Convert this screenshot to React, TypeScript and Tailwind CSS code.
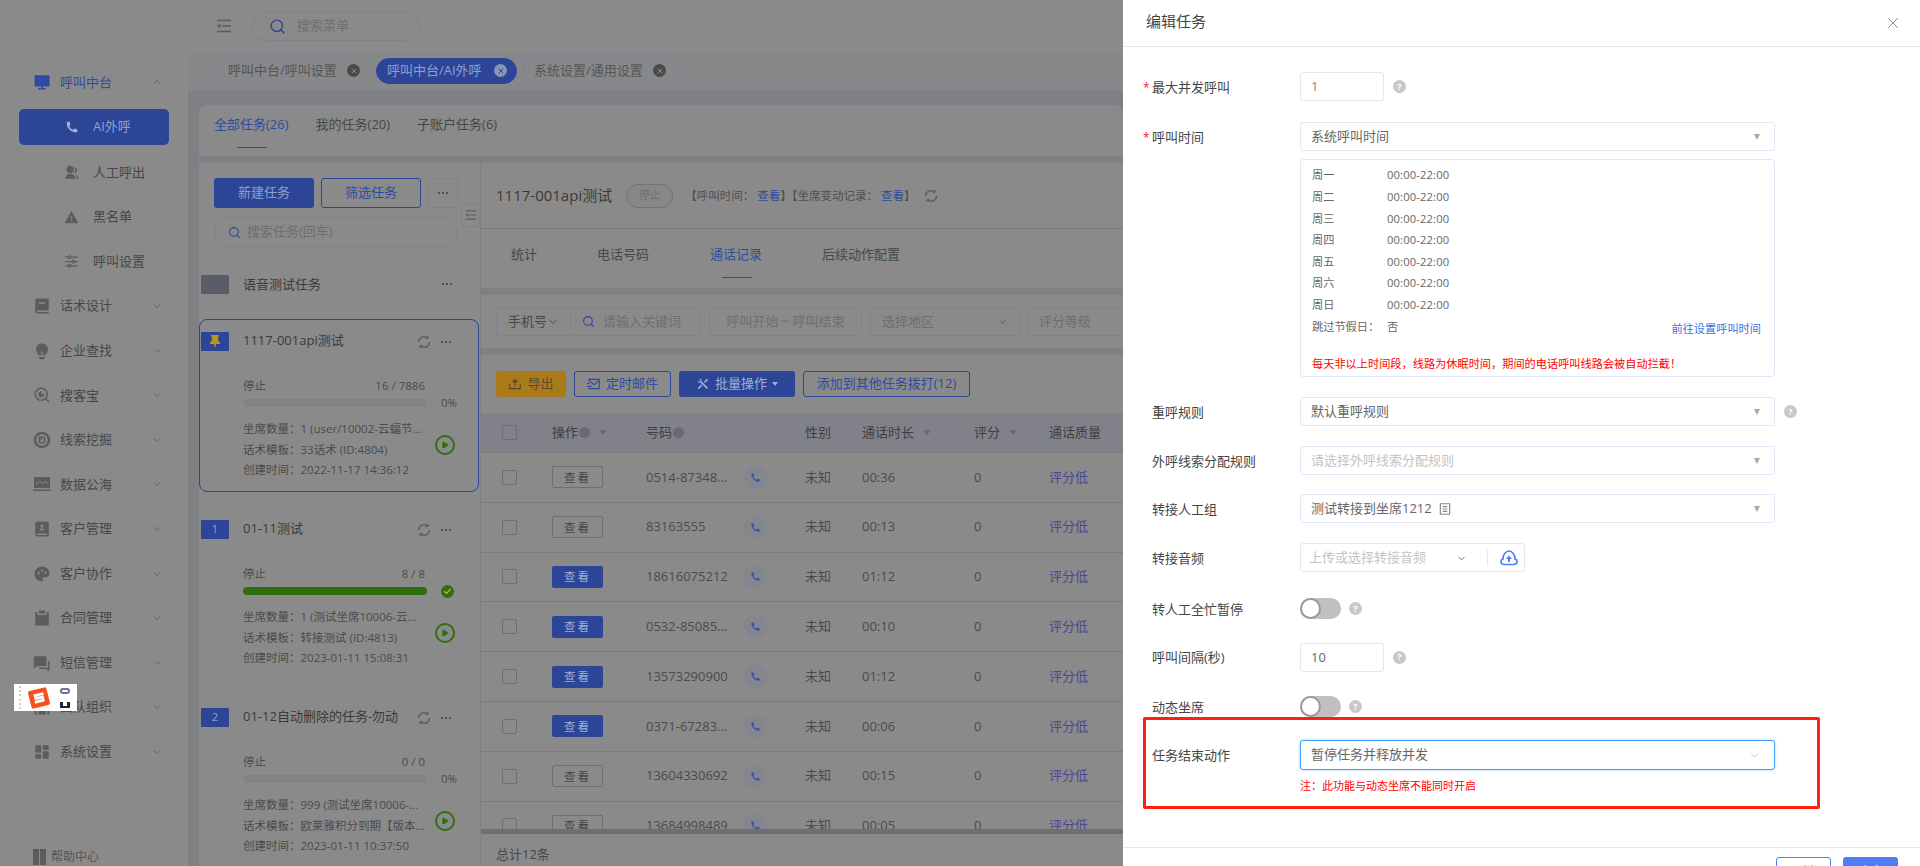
import type { ReactNode } from "react";
import { Check, ChevronDown, ChevronUp, Play, Search, X } from "lucide-react";
import {
  RiAlertFill,
  RiBook2Fill,
  RiClipboardFill,
  RiComputerFill,
  RiContactsBook2Fill,
  RiDashboardFill,
  RiEqualizerLine,
  RiFileListLine,
  RiGroupFill,
  RiLightbulbFill,
  RiMailSendLine,
  RiPaletteFill,
  RiPhoneFill,
  RiQuestionAnswerFill,
  RiSearchEyeLine,
  RiTeamFill,
  RiToolsFill,
  RiUpload2Line,
} from "react-icons/ri";

function TargetIcon() {
  return (
    <svg width="18" height="18" viewBox="0 0 18 18" fill="none" stroke="currentColor">
      <circle cx="9" cy="9" r="7" strokeWidth="2.6" />
      <circle cx="9" cy="9" r="3" strokeWidth="1.4" />
      <path d="M6 5.5 L9 9" strokeWidth="1.4" />
    </svg>
  );
}

function SeaIcon() {
  return (
    <svg width="18" height="18" viewBox="0 0 18 18">
      <rect x="1" y="2" width="16" height="11" fill="currentColor" />
      <path d="M3.5 9 L6.5 6.5 L9.5 8.5 L12 6.5 L14.5 8" fill="none" stroke="#8a8a8a" strokeWidth="1" />
      <rect y="14.5" width="18" height="1.5" fill="currentColor" />
    </svg>
  );
}

function CollapseIcon({ size, className }: { size: number; className?: string }) {
  return (
    <svg width={size} height={size} viewBox="0 0 16 16" className={className}>
      <path d="M1 2.5H15 M6 8H15 M1 13.5H15" stroke="currentColor" strokeWidth="1.5" fill="none" />
      <path d="M4.5 5.5 L1 8 L4.5 10.5 Z" fill="currentColor" />
    </svg>
  );
}

function RefreshIcon({ size, className }: { size: number; className?: string }) {
  return (
    <svg width={size} height={size} viewBox="0 0 14 14" fill="none" stroke="currentColor" strokeWidth="1.3" className={className}>
      <path d="M1.6 7 A5.4 5.4 0 0 1 10.8 3.2" />
      <path d="M12.4 7 A5.4 5.4 0 0 1 3.2 10.8" />
      <path d="M11 1 V3.4 H8.6 M3 13 V10.6 H5.4" strokeWidth="1" />
    </svg>
  );
}

function PinIcon() {
  return (
    <svg width="14" height="15" viewBox="0 0 14 15" className="text-[#b19a17]">
      <path d="M3 1 H11 V2.5 L10 3 V6.5 L12 8.5 V10 H8 L7 14.5 L6 10 H2 V8.5 L4 6.5 V3 L3 2.5 Z" fill="currentColor" />
    </svg>
  );
}

const menu = [
  { icon: <RiBook2Fill size={18} />, label: "话术设计" },
  { icon: <RiLightbulbFill size={18} />, label: "企业查找" },
  { icon: <RiSearchEyeLine size={18} />, label: "搜客宝" },
  { icon: <TargetIcon />, label: "线索挖掘" },
  { icon: <SeaIcon />, label: "数据公海" },
  { icon: <RiContactsBook2Fill size={18} />, label: "客户管理" },
  { icon: <RiPaletteFill size={18} />, label: "客户协作" },
  { icon: <RiClipboardFill size={18} />, label: "合同管理" },
  { icon: <RiQuestionAnswerFill size={18} />, label: "短信管理" },
  { icon: <RiTeamFill size={18} />, label: "团队组织" },
  { icon: <RiDashboardFill size={18} />, label: "系统设置" },
];

const subMenu = [
  { icon: <RiGroupFill size={15} />, label: "人工呼出" },
  { icon: <RiAlertFill size={15} />, label: "黑名单" },
  { icon: <RiEqualizerLine size={15} />, label: "呼叫设置" },
];

const tasks = [
  {
    flag: "pin",
    name: "1117-001api测试",
    count: "16 / 7886",
    done: false,
    seat: "1 (user/10002-云蝠节...",
    tpl: "33话术 (ID:4804)",
    time: "2022-11-17 14:36:12",
    active: true,
  },
  {
    flag: "1",
    name: "01-11测试",
    count: "8 / 8",
    done: true,
    seat: "1 (测试坐席10006-云...",
    tpl: "转接测试 (ID:4813)",
    time: "2023-01-11 15:08:31",
    active: false,
  },
  {
    flag: "2",
    name: "01-12自动删除的任务-勿动",
    count: "0 / 0",
    done: false,
    seat: "999 (测试坐席10006-...",
    tpl: "欧莱雅积分到期【版本...",
    time: "2023-01-11 10:37:50",
    active: false,
  },
];

const calls = [
  { phone: "0514-87348...", time: "00:36", solid: false },
  { phone: "83163555", time: "00:13", solid: false },
  { phone: "18616075212", time: "01:12", solid: true },
  { phone: "0532-85085...", time: "00:10", solid: true },
  { phone: "13573290900", time: "01:12", solid: true },
  { phone: "0371-67283...", time: "00:06", solid: true },
  { phone: "13604330692", time: "00:15", solid: false },
  { phone: "13684998489", time: "00:05", solid: false },
];

const week = ["周一", "周二", "周三", "周四", "周五", "周六", "周日"];

function Dots({ className = "" }: { className?: string }) {
  return (
    <span className={`flex gap-[2px] ${className}`}>
      <i className="h-[2px] w-[2px] rounded-full bg-[#3f3f3f]" />
      <i className="h-[2px] w-[2px] rounded-full bg-[#3f3f3f]" />
      <i className="h-[2px] w-[2px] rounded-full bg-[#3f3f3f]" />
    </span>
  );
}

function Tag({ label, active, width }: { label: string; active?: boolean; width: string }) {
  return (
    <div
      className={`flex h-[26px] items-center justify-between rounded-full border pl-[10px] pr-[9px] text-[13px] ${width} ${
        active ? "border-[#2c4597] bg-[#2c4597] text-[#8fa0cf]" : "border-[#80828f] text-[#555]"
      }`}
    >
      {label}
      <span
        className={`flex h-[13px] w-[13px] items-center justify-center rounded-full ${
          active ? "bg-[#8a94b8] text-[#2c4597]" : "bg-[#4a4a4a] text-[#8a8a8a]"
        }`}
      >
        <X size={8} strokeWidth={3} />
      </span>
    </div>
  );
}

function TaskCard({ task }: { task: (typeof tasks)[number] }) {
  return (
    <div className={`h-[173px] w-[280px] rounded-lg border pt-[12px] ${task.active ? "border-[#2c4597]" : "border-transparent"}`}>
      <div className="flex h-[19px] items-center">
        <div className="ml-[1px] flex h-[19px] w-[28px] items-center justify-center rounded-[1px] bg-[#2c4597] text-[11px] text-[#8fa0cf]">
          {task.flag === "pin" ? <PinIcon /> : task.flag}
        </div>
        <span className="-mt-[2px] ml-[14px] w-[160px] truncate text-[13px] text-[#3a3a3a]">{task.name}</span>
        <RefreshIcon size={14} className="ml-[14px] text-[#5a5a5a]" />
        <Dots className="ml-[10px]" />
      </div>
      <div className="ml-[43px] mt-[27px] flex h-[16px] w-[182px] items-center justify-between text-[11.5px] text-[#4a4a4a]">
        <span>停止</span>
        <span>{task.count}</span>
      </div>
      <div className="ml-[43px] mt-[5px] flex h-[8px] items-center">
        <div className={`h-[8px] w-[184px] rounded-full ${task.done ? "bg-[#2f6f10]" : "bg-[#838383]"}`} />
        {task.done ? (
          <span className="ml-[14px] flex h-[13px] w-[13px] items-center justify-center rounded-full bg-[#2f6f10] text-[#9fbf90]">
            <Check size={9} strokeWidth={3} />
          </span>
        ) : (
          <span className="ml-[14px] text-[11.5px] text-[#4a4a4a]">0%</span>
        )}
      </div>
      <div className="ml-[43px] mt-[12px] flex items-start">
        <div className="w-[190px] text-[11.5px] leading-[20.5px] text-[#4a4a4a]">
          <p className="whitespace-nowrap">坐席数量：{task.seat}</p>
          <p className="whitespace-nowrap">话术模板：{task.tpl}</p>
          <p className="whitespace-nowrap">创建时间：{task.time}</p>
        </div>
        <span className="mt-[16px] ml-[2px] flex h-[20px] w-[20px] items-center justify-center rounded-full border-2 border-[#2f6f10] text-[#2f6f10]">
          <Play size={8} fill="currentColor" />
        </span>
      </div>
    </div>
  );
}

function ToolButton({ children, className }: { children: ReactNode; className: string }) {
  return <div className={`flex h-[26px] items-center justify-center gap-[5px] rounded-[3px] text-[13px] ${className}`}>{children}</div>;
}

function Sort() {
  return <i className="ml-[9px] h-0 w-0 border-x-[4px] border-t-[5px] border-x-transparent border-t-[#6a6a70]" />;
}

function HeadHelp() {
  return <i className="ml-[1px] h-[11px] w-[11px] rounded-full bg-[#6a6a70]" />;
}

function FormRow({ label, required, className, children }: { label: string; required?: boolean; className?: string; children: ReactNode }) {
  return (
    <div className={`flex items-center ${className ?? ""}`}>
      <span className="relative ml-[29px] w-[148px] pt-[2px] text-[13px] text-[#444]">
        {required && <span className="absolute left-[-9px] top-[3px] text-[12px] text-[#f5222d]">*</span>}
        {label}
      </span>
      {children}
    </div>
  );
}

function Help({ className = "" }: { className?: string }) {
  return (
    <span className={`flex h-[13px] w-[13px] items-center justify-center rounded-full bg-[#c8c8c8] text-[9px] font-bold text-white ${className}`}>?</span>
  );
}

function Caret() {
  return <i className="h-0 w-0 border-x-[3.5px] border-t-[6px] border-x-transparent border-t-[#aaa]" />;
}

function SelectBox({ children, placeholder }: { children: ReactNode; placeholder?: boolean }) {
  return (
    <div
      className={`flex h-[29px] w-[475px] items-center justify-between rounded-[3px] border border-[#e1e8f7] pl-[10px] pr-[14px] text-[13px] ${
        placeholder ? "text-[#c4c4c4]" : "text-[#666]"
      }`}
    >
      <span className="flex items-center gap-[6px] pt-[1px]">{children}</span>
      <Caret />
    </div>
  );
}

function Toggle() {
  return (
    <span className="flex h-[21px] w-[41px] items-center rounded-full bg-[#c0c0c0]">
      <i className="h-[21px] w-[21px] rounded-full border-2 border-[#9a9a9a] bg-white" />
    </span>
  );
}

export default function App() {
  return (
    <div className="relative flex h-[866px] w-[1920px] overflow-hidden bg-white font-['Open_Sans','Noto_Sans_CJK_SC',sans-serif]">
      {/* dimmed page behind the drawer */}
      <div className="flex h-full w-[1123px] shrink-0 overflow-hidden bg-[#7f8084]">
        <aside className="flex h-full w-[188px] shrink-0 flex-col bg-[#8a8a8a] pt-[60px] text-[13px] text-[#474747]">
          <div className="flex h-[45px] items-center pl-[33px] pr-[25px] text-[#2f4aa0]">
            <RiComputerFill size={18} />
            <span className="ml-[9px] flex-1">呼叫中台</span>
            <ChevronUp size={12} className="text-[#666]" />
          </div>
          <div className="mx-[19px] mb-[5px] mt-[4px] flex h-[37px] items-center rounded-[5px] bg-[#2c4597] pl-[46px] text-[#8fa0cf]">
            <RiPhoneFill size={14} className="text-[#a5b3d8]" />
            <span className="ml-[14px]">AI外呼</span>
          </div>
          {subMenu.map((item) => (
            <div key={item.label} className="flex h-[45px] items-center pl-[64px]">
              <span className="text-[#5c5c5c]">{item.icon}</span>
              <span className="ml-[14px]">{item.label}</span>
            </div>
          ))}
          {menu.map((item) => (
            <div key={item.label} className="flex h-[45px] items-center pl-[33px] pr-[25px]">
              <span className="text-[#5c5c5c]">{item.icon}</span>
              <span className="ml-[9px] flex-1">{item.label}</span>
              <ChevronDown size={12} className="text-[#666]" />
            </div>
          ))}
          <div className="mt-[74px] flex items-center pl-[33px] text-[12px] text-[#555]">
            <span className="flex h-[16px] w-[13px] justify-between">
              <i className="w-[6px] bg-[#5c5c5c]" />
              <i className="w-[6px] bg-[#5c5c5c]" />
            </span>
            <span className="ml-[5px]">帮助中心</span>
          </div>
        </aside>

        <main className="flex w-[935px] shrink-0 flex-col">
          <header className="flex h-[52px] items-center bg-[#8a8a8a] pl-[28px]">
            <CollapseIcon size={16} className="text-[#5c5c5c]" />
            <div className="ml-[20px] flex h-[29px] w-[168px] items-center rounded-full border border-[#80828f] pl-[16px] text-[13px] text-[#6e6e6e]">
              <Search size={17} className="text-[#2c4597]" />
              <span className="ml-[11px]">搜索菜单</span>
            </div>
          </header>
          <div className="flex h-[38px] items-center gap-[6px] bg-[#87888a] pl-[29px] pb-[1px]">
            <Tag label="呼叫中台/呼叫设置" width="w-[153px]" />
            <Tag label="呼叫中台/AI外呼" active width="w-[141px]" />
            <Tag label="系统设置/通用设置" width="w-[153px]" />
          </div>

          <div className="ml-[11px] mt-[15px] flex h-[51px] items-start gap-[27px] rounded-t-lg bg-[#8a8a8a] pl-[15px] pt-[10px] text-[13px] text-[#474747]">
            <div className="relative text-[#2f4aa0]">
              全部任务(26)
              <i className="absolute left-[23px] top-[32px] h-[1px] w-[30px] bg-[#2f4aa0]" />
            </div>
            <div>我的任务(20)</div>
            <div>子账户任务(6)</div>
          </div>

          <div className="ml-[11px] mt-[7px] flex min-h-0 flex-1">
            <section className="relative w-[281px] shrink-0 bg-[#8a8a8a] pt-[15px]">
              <div className="flex pl-[15px]">
                <div className="flex h-[30px] w-[100px] items-center justify-center rounded-[3px] bg-[#2c4597] text-[13px] text-[#8fa0cf]">新建任务</div>
                <div className="ml-[7px] flex h-[30px] w-[100px] items-center justify-center rounded-[3px] border border-[#2c4597] text-[13px] text-[#2f4aa0]">筛选任务</div>
                <div className="ml-[7px] flex h-[30px] w-[30px] items-center justify-center rounded-[3px] border border-[#80828f]">
                  <Dots />
                </div>
              </div>
              <div className="absolute left-[262px] top-[40px] flex h-[24px] w-[19px] items-center justify-center border border-[#80828f] bg-[#8a8a8a]">
                <CollapseIcon size={12} className="text-[#5c5c5c]" />
              </div>
              <div className="ml-[15px] mt-[9px] flex h-[30px] w-[244px] items-center rounded-full border border-[#80828f] pl-[13px] text-[13px] text-[#6e6e6e]">
                <Search size={13} className="text-[#2c4597]" />
                <span className="ml-[6px]">搜索任务(回车)</span>
              </div>
              <div className="mt-[15px] flex h-[42px] w-[280px] items-start pt-[13px]">
                <div className="ml-[2px] h-[19px] w-[28px] rounded-[1px] bg-[#5a5d66]" />
                <span className="ml-[14px] flex-1 text-[13px] text-[#3a3a3a]">语音测试任务</span>
                <Dots className="mr-[27px] mt-[8px]" />
              </div>
              <div className="mt-[15px] flex flex-col gap-[15px]">
                {tasks.map((task) => (
                  <TaskCard key={task.name} task={task} />
                ))}
              </div>
            </section>

            <section className="ml-[1px] flex min-w-0 flex-1 flex-col overflow-hidden">
              <div className="flex h-[66px] shrink-0 items-center border-b border-[#7a7b7d] bg-[#8a8a8a] pl-[15px] text-[#3a3a3a]">
                <span className="text-[15px]">1117-001api测试</span>
                <span className="ml-[14px] flex h-[24px] w-[47px] items-center justify-center rounded-full border border-[#737373] bg-[#878787] text-[11px] text-[#6e6e6e]">停止</span>
                <span className="ml-[12px] whitespace-nowrap text-[11.5px] text-[#4f4f4f]">
                  【呼叫时间： <span className="text-[#2f4aa0]">查看</span>】【坐席变动记录： <span className="text-[#2f4aa0]">查看</span>】
                </span>
                <RefreshIcon size={14} className="ml-[9px] text-[#5a5a5a]" />
              </div>
              <div className="flex h-[59px] shrink-0 items-start bg-[#8a8a8a] text-[13px] text-[#474747]">
                <span className="ml-[30px] mt-[16px]">统计</span>
                <span className="ml-[60px] mt-[16px]">电话号码</span>
                <span className="relative ml-[61px] mt-[16px] text-[#2f4aa0]">
                  通话记录
                  <i className="absolute left-[12px] top-[32px] h-[1px] w-[30px] bg-[#2f4aa0]" />
                </span>
                <span className="ml-[60px] mt-[16px]">后续动作配置</span>
              </div>
              <div className="mt-[7px] flex h-[53px] shrink-0 items-start gap-[8px] bg-[#8a8a8a] pl-[15px] pt-[12px] text-[13px] text-[#6e6e6e]">
                <div className="flex h-[29px] w-[205px] shrink-0 rounded-[3px] border border-[#80828f]">
                  <span className="flex w-[74px] items-center justify-center border-r border-[#80828f] text-[#474747]">
                    手机号
                    <ChevronDown size={12} />
                  </span>
                  <span className="flex items-center pl-[11px]">
                    <Search size={13} className="text-[#2c4597]" />
                    <span className="ml-[8px]">请输入关键词</span>
                  </span>
                </div>
                <div className="flex h-[29px] w-[153px] shrink-0 items-center justify-center rounded-[3px] border border-[#80828f]">呼叫开始 ~ 呼叫结束</div>
                <div className="flex h-[29px] w-[150px] shrink-0 items-center justify-between rounded-[3px] border border-[#80828f] pl-[11px] pr-[10px]">
                  选择地区
                  <ChevronDown size={13} />
                </div>
                <div className="flex h-[29px] w-[120px] shrink-0 items-center rounded-l-[3px] border border-r-0 border-[#80828f] pl-[10px]">评分等级</div>
              </div>
              <div className="mt-[7px] flex h-[58px] shrink-0 items-start gap-[8px] bg-[#8a8a8a] pl-[15px] pt-[16px] whitespace-nowrap">
                <ToolButton className="w-[70px] bg-[#aa7a1b] text-[#5f4a22]">
                  <RiUpload2Line size={14} />
                  导出
                </ToolButton>
                <ToolButton className="w-[97px] border border-[#2c4597] text-[#2f4aa0]">
                  <RiMailSendLine size={14} />
                  定时邮件
                </ToolButton>
                <ToolButton className="w-[116px] bg-[#2c4597] text-[#a0aed5]">
                  <RiToolsFill size={14} />
                  批量操作
                  <i className="h-0 w-0 border-x-[3.5px] border-t-[4px] border-x-transparent border-t-[#a0aed5]" />
                </ToolButton>
                <ToolButton className="w-[167px] border border-[#2c4597] text-[#2f4aa0]">添加到其他任务拨打(12)</ToolButton>
              </div>

              <div className="h-[416px] shrink-0 overflow-hidden bg-[#8a8a8a] text-[13px] text-[#4a4a4a]">
                <div className="grid h-[40px] grid-cols-[71px_94px_159px_57px_112px_75px_1fr] items-center border-b border-[#7a7b7d] bg-[#808189] text-[#3f3f3f]">
                  <span className="pl-[21px]">
                    <i className="block h-[15px] w-[15px] rounded-[2px] border border-[#6e6e6e]" />
                  </span>
                  <span className="flex items-center">操作<HeadHelp /><Sort /></span>
                  <span className="flex items-center">号码<HeadHelp /></span>
                  <span>性别</span>
                  <span className="flex items-center">通话时长<Sort /></span>
                  <span className="flex items-center">评分<Sort /></span>
                  <span>通话质量</span>
                </div>
                {calls.map((call) => (
                  <div key={call.phone} className="grid h-[49.8px] grid-cols-[71px_94px_159px_57px_112px_75px_1fr] items-center border-b border-[#7a7b7d]">
                    <span className="pl-[21px]">
                      <i className="block h-[15px] w-[15px] rounded-[2px] border border-[#6e6e6e]" />
                    </span>
                    <span
                      className={`flex h-[22px] w-[51px] items-center justify-center rounded-[2px] text-[11.5px] tracking-[2px] ${
                        call.solid ? "bg-[#2c4597] text-[#a0aed5]" : "border border-[#6e6e6e] text-[#444]"
                      }`}
                    >
                      查看
                    </span>
                    <span className="flex items-center">
                      <span className="w-[98px] whitespace-nowrap">{call.phone}</span>
                      <span className="flex h-[23px] w-[23px] items-center justify-center rounded-full bg-[#83858f] text-[#3753a8]">
                        <RiPhoneFill size={11} />
                      </span>
                    </span>
                    <span>未知</span>
                    <span>{call.time}</span>
                    <span>0</span>
                    <span className="text-[#4a4698]">评分低</span>
                  </div>
                ))}
              </div>
              <div className="h-[5px] shrink-0 rounded-full bg-[#6f6f6f]" />
              <div className="flex-1 bg-[#8a8a8a] pl-[15px] pt-[11px] text-[13px] text-[#474747]">总计12条</div>
            </section>
          </div>
        </main>
      </div>

      {/* drawer */}
      <div className="relative flex h-full w-[797px] shrink-0 flex-col bg-white">
        <div className="flex h-[47px] shrink-0 items-center justify-between border-b border-[#e8e8e8] pl-[23px] pr-[18px]">
          <span className="-mt-[3px] text-[15px] text-[#444]">编辑任务</span>
          <X size={18} strokeWidth={1} className="text-[#666]" />
        </div>

        <div className="h-[800px] shrink-0 text-[13px]">
          <FormRow label="最大并发呼叫" required className="mt-[25px]">
            <div className="flex h-[29px] w-[84px] items-center rounded-[3px] border border-[#e1e8f7] pl-[10px] pt-[1px] text-[#888]">1</div>
            <Help className="ml-[9px]" />
          </FormRow>
          <FormRow label="呼叫时间" required className="mt-[21px]">
            <SelectBox>系统呼叫时间</SelectBox>
          </FormRow>
          <div className="ml-[177px] mt-[8px] h-[218px] w-[475px] rounded-[3px] border border-[#e1e8f7] px-[11px] pt-[5px] text-[11.2px] text-[#666]">
            {week.map((d) => (
              <div key={d} className="flex h-[21.6px] items-center">
                <span className="w-[75px]">{d}</span>
                <span className="tracking-[0.15px]">00:00-22:00</span>
              </div>
            ))}
            <div className="flex h-[22px] items-center">
              <span className="w-[75px]">跳过节假日：</span>
              <span>否</span>
              <span className="ml-auto mt-[4px] mr-[2px] text-[#3f6fe0]">前往设置呼叫时间</span>
            </div>
            <p className="mt-[18px] text-[#f00]">每天非以上时间段，线路为休眠时间，期间的电话呼叫线路会被自动拦截！</p>
          </div>
          <FormRow label="重呼规则" className="mt-[20px]">
            <SelectBox>默认重呼规则</SelectBox>
            <Help className="ml-[9px]" />
          </FormRow>
          <FormRow label="外呼线索分配规则" className="mt-[20px]">
            <SelectBox placeholder>请选择外呼线索分配规则</SelectBox>
          </FormRow>
          <FormRow label="转接人工组" className="mt-[19px]">
            <SelectBox>
              测试转接到坐席1212
              <RiFileListLine size={14} className="text-[#888]" />
            </SelectBox>
          </FormRow>
          <FormRow label="转接音频" className="mt-[20px]">
            <div className="flex h-[29px] w-[225px] items-center rounded-[3px] border border-[#e1e8f7] pl-[8px] pt-[1px] text-[#c4c4c4]">
              <span className="w-[147px]">上传或选择转接音频</span>
              <ChevronDown size={11} className="text-[#666]" />
              <i className="ml-[20px] h-[16px] w-[1px] bg-[#e1e8f7]" />
              <svg width="20" height="18" viewBox="0 0 20 18" className="ml-[11px] text-[#4f7cf7]">
                <path d="M5 15.5 C1.5 15.5 0.8 11 4 10 C3.5 6 7 2 10 2 C13 2 16.5 6 16 10 C19.2 11 18.5 15.5 15 15.5 Z" fill="none" stroke="currentColor" strokeWidth="1.6" />
                <path d="M10 6.5 L13 10 L11 10 L11 13 L9 13 L9 10 L7 10 Z" fill="currentColor" />
              </svg>
            </div>
          </FormRow>
          <FormRow label="转人工全忙暂停" className="mt-[26px]">
            <Toggle />
            <Help className="ml-[8px]" />
          </FormRow>
          <FormRow label="呼叫间隔(秒)" className="mt-[23px]">
            <div className="flex h-[29px] w-[84px] items-center rounded-[3px] border border-[#e1e8f7] pl-[10px] pt-[1px] text-[#666]">10</div>
            <Help className="ml-[9px]" />
          </FormRow>
          <FormRow label="动态坐席" className="mt-[24px]">
            <Toggle />
            <Help className="ml-[8px]" />
          </FormRow>
          <FormRow label="任务结束动作" className="mt-[23px]">
            <div className="flex h-[30px] w-[475px] items-center justify-between rounded-[3px] border border-[#409eff] pl-[10px] pr-[13px] text-[#666] shadow-[0_0_3px_#9fd0ff]">
              暂停任务并释放并发
              <ChevronDown size={13} strokeWidth={1.2} className="text-[#aaa]" />
            </div>
          </FormRow>
          <p className="ml-[177px] mt-[8px] text-[11px] text-[#f00]">注：此功能与动态坐席不能同时开启</p>
        </div>

        {/* red annotation drawn over the form */}
        <div className="absolute left-[20px] top-[717px] h-[92px] w-[677px] rounded-[2px] border-[3px] border-[#ff2010]" />

        <div className="absolute left-0 right-0 top-[847px] flex justify-end gap-[12px] border-t border-[#e8e8e8] pr-[22px] pt-[9px] text-[12.5px]">
          <span className="flex h-[30px] w-[55px] items-center justify-center rounded-[3px] border border-[#4f7cf7] text-[#4f7cf7]">取消</span>
          <span className="flex h-[30px] w-[55px] items-center justify-center rounded-[3px] bg-[#4f7cf7] text-white">确定</span>
        </div>
      </div>

      {/* floating input method widget */}
      <div className="absolute left-[14px] top-[684px] flex h-[27px] w-[63px] items-center bg-white">
        <span className="ml-[5px] flex h-[26px] flex-col justify-between py-[1px]">
          {[0, 1, 2, 3, 4, 5].map((n) => (
            <i key={n} className="h-[2px] w-[2px] bg-[#ccc]" />
          ))}
        </span>
        <svg width="24" height="24" viewBox="0 0 24 24" className="ml-[6px]">
          <rect x="2.5" y="3" width="19" height="18" rx="2" transform="rotate(-14 12 12)" fill="#f4511e" />
          <path d="M16.5 7.5 L8 9.5 L8.8 12.6 L15.4 11 L16.2 14.2 L7.8 16.4" fill="none" stroke="#fff" strokeWidth="2.8" />
        </svg>
        <span className="ml-[9px] flex flex-col items-center gap-[8px]">
          <i className="h-[6px] w-[10px] rounded-[3px] border-2 border-[#6a7690]" />
          <i className="h-[6px] w-[10px] border-x-[3px] border-b-[2px] border-[#223]" />
        </span>
      </div>
    </div>
  );
}
